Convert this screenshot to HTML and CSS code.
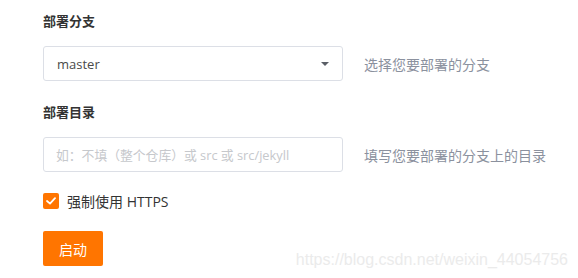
FILE: index.html
```html
<!DOCTYPE html>
<html>
<head>
    <meta charset="UTF-8">
    <title>部署</title>
    <link rel="stylesheet" href="styles.css">
</head>
<body>
    <div class="container">
        <div class="form-item">
            <div class="form-label">部署分支</div>
            <div class="form-row">
                <div class="select-box">
                    <span class="select-value">master</span>
                    <span class="select-arrow"></span>
                </div>
                <span class="form-tip">选择您要部署的分支</span>
            </div>
        </div>

        <div class="form-item">
            <div class="form-label">部署目录</div>
            <div class="form-row">
                <input class="input-field" type="text" placeholder="如：不填（整个仓库）或 src 或 src/jekyll">
                <span class="form-tip">填写您要部署的分支上的目录</span>
            </div>
        </div>

        <label class="check-row">
            <span class="check-box">
                <svg width="10" height="8" viewBox="0 0 10 8"><path d="M1 4 L4 6.6 L9 1.2" fill="none" stroke="#fff" stroke-width="1.8" stroke-linecap="round" stroke-linejoin="round"/></svg>
            </span>
            <span class="check-text">强制使用 HTTPS</span>
        </label>

        <button class="btn-start">启动</button>
    </div>

    <div class="watermark">https://blog.csdn.net/weixin_44054756</div>
</body>
</html>
```

FILE: styles.css
```css
body {
    font-family: "Open Sans", "Noto Sans CJK SC", sans-serif;
    background-color: #ffffff;
    margin: 0;
    padding: 0;
    width: 578px;
    height: 278px;
    overflow: hidden;
    position: relative;
}

.container {
    padding: 11px 0 0 43px;
}

.form-item {
    margin-bottom: 21px;
}

.form-label {
    font-size: 13px;
    font-weight: bold;
    color: #333;
    line-height: 20px;
    margin-bottom: 15px;
}

.form-row {
    display: flex;
    align-items: center;
}

.select-box,
.input-field {
    box-sizing: border-box;
    width: 300px;
    height: 35px;
    border: 1px solid #dcdfe6;
    border-radius: 3px;
    background: #fff;
}

.select-box {
    display: flex;
    align-items: center;
    justify-content: space-between;
    padding: 0 13px;
}

.select-value {
    font-size: 13px;
    color: #4a4a4a;
}

.select-arrow {
    width: 0;
    height: 0;
    border-left: 4px solid transparent;
    border-right: 4px solid transparent;
    border-top: 4px solid #5a5e66;
}

.input-field {
    padding: 0 12px;
    font-family: inherit;
    font-size: 12.8px;
    color: #4a4a4a;
    outline: none;
}

.input-field::placeholder {
    color: #c6c8cc;
}

.form-tip {
    margin-left: 21px;
    font-size: 14px;
    color: #8b919e;
}

.check-row {
    display: flex;
    align-items: center;
    height: 20px;
    margin-top: -2px;
}

.check-box {
    width: 16px;
    height: 16px;
    border-radius: 2px;
    background-color: #ff7500;
    display: flex;
    align-items: center;
    justify-content: center;
}

.check-text {
    margin-left: 8px;
    font-size: 14px;
    color: #333;
}

.btn-start {
    margin-top: 20px;
    width: 60px;
    height: 35px;
    border: none;
    border-radius: 2px;
    background-color: #ff7500;
    color: #fff;
    font-family: inherit;
    font-size: 14px;
    cursor: pointer;
}

.watermark {
    position: absolute;
    right: 10px;
    top: 251px;
    font-family: "Liberation Sans", sans-serif;
    font-size: 16px;
    color: #ebebeb;
}
```
